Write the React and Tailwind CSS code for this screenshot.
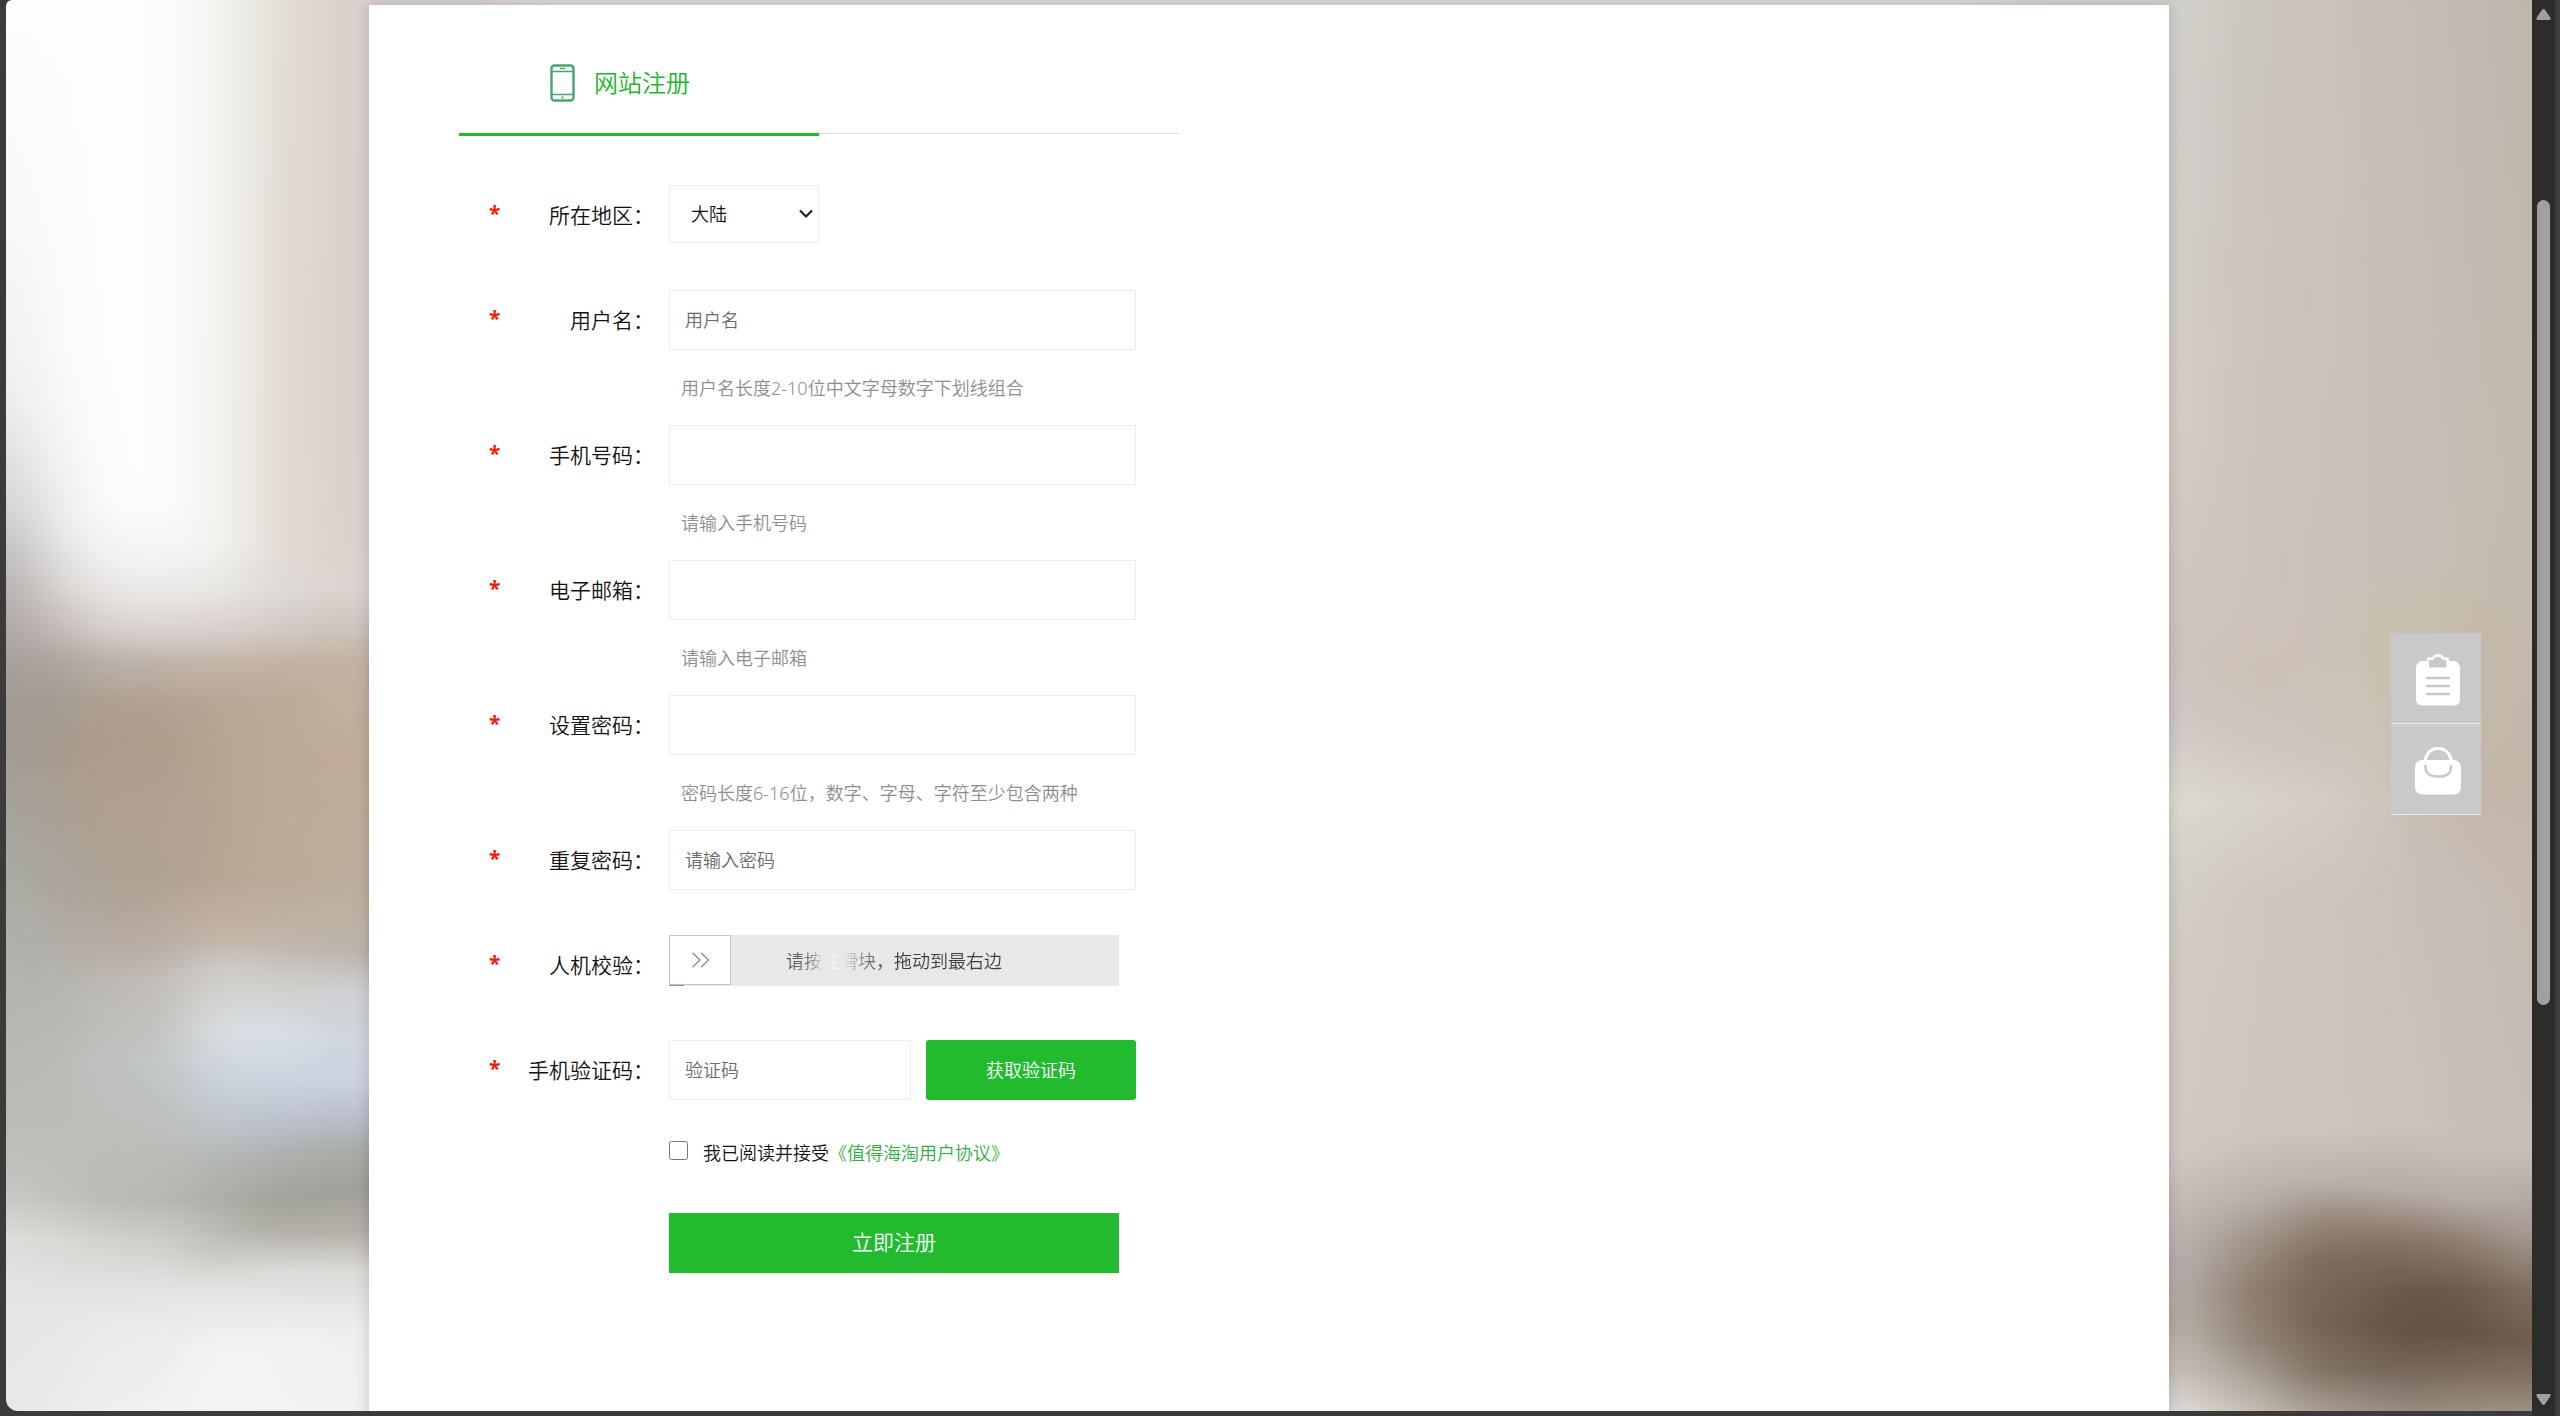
import { useId } from "react";

// Vertical colour runs of the blurred room photo behind the page: [x, width, [[y, colour], ...]]
const PHOTO_COLUMNS = [
  [-120, 150, [[0, "#fdfdfd"], [220, "#f8f8f8"], [400, "#ececec"], [500, "#d5d3d3"], [560, "#bdbab9"], [620, "#b0a8a5"], [680, "#a49c97"], [740, "#a29b93"], [800, "#a4a29b"], [870, "#aaaba4"], [1000, "#b3b6af"], [1150, "#bdc0b9"], [1200, "#c8cac5"], [1240, "#dcdeda"], [1290, "#e4e4e3"], [1410, "#e8e8e8"]]],
  [30, 50, [[0, "#fdfdfd"], [350, "#fbfbfb"], [450, "#f6f6f6"], [530, "#ececeb"], [580, "#dcd9d7"], [630, "#c4bbb7"], [660, "#aea59f"], [700, "#a39b92"], [760, "#a79a8d"], [820, "#aa9f94"], [880, "#a9a49c"], [940, "#b0aca6"], [1000, "#b6b6b0"], [1100, "#babcb6"], [1190, "#bec0ba"], [1240, "#d7d9d5"], [1290, "#e4e5e3"], [1410, "#eaeaea"]]],
  [80, 100, [[0, "#fdfdfd"], [500, "#fdfdfd"], [560, "#f4f3f2"], [600, "#e6e3e1"], [630, "#d9d1ce"], [660, "#bfb4ab"], [700, "#b0a193"], [740, "#ae9b8a"], [800, "#b0a090"], [880, "#aea294"], [940, "#b7aaa1"], [980, "#bfbab4"], [1060, "#c0c4c2"], [1150, "#bbbdb8"], [1200, "#b8bbb5"], [1240, "#ced1cb"], [1280, "#e0e1df"], [1330, "#ebebeb"], [1410, "#f0f0f0"]]],
  [180, 60, [[0, "#f5f6f2"], [540, "#f4f5f2"], [590, "#e9e7e4"], [630, "#d9d0cc"], [660, "#c4b7ab"], [700, "#b9a795"], [780, "#b6a592"], [880, "#b8a593"], [940, "#c5b7ab"], [970, "#d0cdc9"], [1030, "#dbdfe0"], [1080, "#cad3dc"], [1130, "#bdc3c6"], [1160, "#b3b7b3"], [1200, "#adafa8"], [1250, "#c5c5be"], [1290, "#e4e4e3"], [1350, "#f3f3f3"], [1410, "#f4f5f6"]]],
  [240, 60, [[0, "#e3ded7"], [540, "#e4dcd5"], [590, "#dedbd7"], [630, "#d4c9c4"], [660, "#c3b4a6"], [700, "#bba896"], [880, "#baab97"], [940, "#c2b5aa"], [980, "#cfccc8"], [1030, "#d9e0e9"], [1080, "#ccd5df"], [1120, "#bcc2ce"], [1160, "#adafab"], [1200, "#a2a299"], [1230, "#b0aea6"], [1270, "#dddcda"], [1340, "#f2f2f4"], [1410, "#f3f3f5"]]],
  [300, 200, [[0, "#dad1cc"], [450, "#d9d1cc"], [590, "#dbd3ce"], [630, "#cbc3bd"], [660, "#c4b3a3"], [760, "#c0ab98"], [880, "#bcae9c"], [950, "#bdb4ac"], [990, "#cfcfd0"], [1040, "#ced6df"], [1080, "#ccd2df"], [1120, "#b7bcc8"], [1150, "#a9aca9"], [1190, "#a1a199"], [1230, "#b4b0a8"], [1270, "#dcdad7"], [1330, "#efeff0"], [1410, "#f1f1f3"]]],
  [500, 1500, [[0, "#dcdad8"], [1410, "#d6d2cf"]]],
  [2000, 210, [[0, "#d3d1cb"], [180, "#d2cfc9"], [420, "#d6cdc7"], [650, "#cec4bf"], [720, "#cfc8c4"], [800, "#ded8d1"], [870, "#d5d0c9"], [1000, "#d2cac4"], [1150, "#d1c9c4"], [1200, "#c4bbb6"], [1270, "#b5aeaa"], [1320, "#b5ada4"], [1370, "#c6c0b9"], [1410, "#dedad5"]]],
  [2210, 70, [[0, "#cbc5bf"], [600, "#cdc2bd"], [670, "#ccc0b4"], [740, "#cfc6c0"], [800, "#d8d2cc"], [900, "#cfc7c1"], [1130, "#cfc6c0"], [1200, "#b9b0ab"], [1240, "#a19489"], [1290, "#8e7d6f"], [1340, "#93867a"], [1410, "#c5bdb4"]]],
  [2280, 80, [[0, "#c9c2bc"], [640, "#cbc0b7"], [740, "#cdc3ba"], [800, "#d4ccc7"], [900, "#cdc4be"], [1130, "#ccc4be"], [1180, "#bbb1ac"], [1220, "#958679"], [1260, "#7c6a5b"], [1320, "#736253"], [1370, "#7f7265"], [1410, "#a79b8f"]]],
  [2360, 70, [[0, "#c5bdb8"], [560, "#c8bfb9"], [640, "#c9c0ad"], [800, "#cbc1b6"], [900, "#cac0bb"], [1130, "#cbc2bc"], [1190, "#b6aba5"], [1240, "#867466"], [1290, "#6b5849"], [1330, "#655243"], [1370, "#74665a"], [1410, "#968a7e"]]],
  [2430, 60, [[0, "#c2b9b4"], [560, "#c5bcb1"], [640, "#c6bba8"], [800, "#c4b7aa"], [900, "#c8beb8"], [1150, "#c8bfb9"], [1200, "#b6aca8"], [1240, "#8f7f72"], [1290, "#6b5949"], [1330, "#655242"], [1370, "#7b6b5e"], [1410, "#9b8e80"]]],
  [2490, 160, [[0, "#beb6aa"], [500, "#c3bab0"], [800, "#c3b6aa"], [900, "#c5b9ae"], [1150, "#c5bdb7"], [1230, "#a89d96"], [1290, "#806f61"], [1340, "#715c4c"], [1370, "#7e6c5f"], [1410, "#9b9084"]]],
];

function PhotoBackdrop() {
  return (
    <svg className="absolute inset-0 size-full" viewBox="0 0 2526 1410" preserveAspectRatio="none" aria-hidden="true">
      <defs>
        <filter id="soft" filterUnits="userSpaceOnUse" x="-120" y="0" width="2780" height="1410" colorInterpolationFilters="sRGB">
          <feGaussianBlur stdDeviation="28 0" />
        </filter>
        {PHOTO_COLUMNS.map(([x, , stops]) => (
          <linearGradient key={x} id={`col${x}`} x1="0" y1="0" x2="0" y2="1410" gradientUnits="userSpaceOnUse">
            {stops.map(([y, c]) => (
              <stop key={y} offset={y / 1410} stopColor={c} />
            ))}
          </linearGradient>
        ))}
      </defs>
      <g filter="url(#soft)">
        {PHOTO_COLUMNS.map(([x, w]) => (
          <rect key={x} x={x} y="0" width={w + 1} height="1410" fill={`url(#col${x})`} />
        ))}
      </g>
    </svg>
  );
}

const inputClass =
  "h-[60px] border border-[#ececec] bg-white px-[15px] text-lg text-[#111] outline-none placeholder:text-[#6a6a6a]";

function Row({ label, id, children }) {
  return (
    <div className="flex items-center gap-[15px]">
      <div className="flex w-[195px] items-center justify-between pl-[30px]">
        <span className="pb-1 text-[21px] font-bold leading-8 text-[#f51c05]">*</span>
        <label htmlFor={id} className="text-[21px] leading-8 text-[#111]">
          {label}：
        </label>
      </div>
      {children}
    </div>
  );
}

function TextField({ label, hint, placeholder, type = "text" }) {
  const id = useId();
  return (
    <div className={hint ? "mb-[22px]" : "mb-[45px]"}>
      <Row label={label} id={id}>
        <input
          id={id}
          type={type}
          placeholder={placeholder}
          aria-describedby={hint ? `${id}-hint` : undefined}
          className={`${inputClass} w-[467px]`}
        />
      </Row>
      {hint && (
        <p id={`${id}-hint`} className="mt-[23px] ml-[222px] text-lg leading-[30px] text-[#8e8e8e]">
          {hint}
        </p>
      )}
    </div>
  );
}

function Shortcut({ name, children }) {
  return (
    <a href="#" aria-label={name} className="flex h-[91px] w-[90px] items-center justify-center border-b border-[#e6e6e6] bg-[#cac9c9] pt-1 pl-1">
      {children}
    </a>
  );
}

function ScrollBar() {
  return (
    <div className="flex w-7 shrink-0 flex-col items-center justify-between bg-linear-to-r from-[#2c2c2b] from-80% to-[#3e3e3e] to-90% pt-[9px] pr-[5px] pb-[11px]">
      <svg className="h-[11px] w-[15px]" viewBox="0 0 15 11" fill="#a0a0a0" aria-hidden="true">
        <path d="M6 .8Q7.500-.6 9 .8L14.500 9Q15 10.800 13.500 11H1.500Q0 10.800.5 9Z" />
      </svg>
      <div className="flex w-full grow flex-col items-center">
        <div className="basis-[13.1%]" />
        <div className="w-[13px] basis-[58.600%] rounded-full bg-[#a0a0a0]" />
      </div>
      <svg className="h-[11px] w-[15px]" viewBox="0 0 15 11" fill="#a0a0a0" aria-hidden="true">
        <path d="M6 10.200Q7.500 11.600 9 10.200L14.500 2Q15 .2 13.500 0H1.500Q0 .2.5 2Z" />
      </svg>
    </div>
  );
}

export default function App() {
  return (
    <div
      className="flex h-screen overflow-hidden bg-[#3b3b3b] pl-1.5 font-[350]"
      style={{ fontFamily: '"Noto Sans", "Noto Sans CJK SC", sans-serif' }}
    >
      <div className="relative mb-[5px] grow overflow-hidden rounded-tl-md rounded-bl-xl">
        <PhotoBackdrop />
        <main className="relative mx-auto mt-[5px] h-full max-w-[1800px] bg-white pl-[90px] shadow-[0_0_14px_rgba(0,0,0,0.18)]">
          <div className="flex h-[129px] max-w-[720px] border-b border-[#ddd]">
            <h1 className="-mb-[3px] flex w-[360px] items-center gap-[19px] border-b-3 border-[#22bb30] pt-7 pl-[91px] text-2xl leading-9 text-[#1fb52d]">
              <svg className="h-[38px] w-[25px]" viewBox="0 0 25 38" fill="none" stroke="#47a56d" strokeWidth="2.400" aria-hidden="true">
                <rect x="1.500" y="1.500" width="22" height="35" rx="3" />
                <path d="M2 7.500h21M2 30.500h21" strokeWidth="1.500" />
                <path d="M10 4.500h5" strokeWidth="1.500" />
                <circle cx="12.500" cy="33.500" r="1" strokeWidth="1" />
              </svg>
              <span>网站注册</span>
            </h1>
          </div>

          <form className="pt-[51px]" onSubmit={(e) => e.preventDefault()}>
            <div className="mb-[45px]">
              <Row label="所在地区" id="region">
                <div className="relative flex h-[60px] w-[150px] items-start">
                  <select
                    id="region"
                    className="h-[58px] w-full appearance-none border border-[#ececec] bg-white pl-[21px] text-lg text-[#111] outline-none"
                  >
                    <option>大陆</option>
                  </select>
                  <svg
                    className="pointer-events-none absolute top-6 right-[6px] h-[10px] w-[14px]"
                    viewBox="0 0 14 10"
                    fill="none"
                    stroke="#222"
                    strokeWidth="2.200"
                    aria-hidden="true"
                  >
                    <path d="M1 1.500l6 6 6-6" />
                  </svg>
                </div>
              </Row>
            </div>

            <TextField label="用户名" placeholder="用户名" hint="用户名长度2-10位中文字母数字下划线组合" />
            <TextField label="手机号码" type="tel" hint="请输入手机号码" />
            <TextField label="电子邮箱" type="email" hint="请输入电子邮箱" />
            <TextField label="设置密码" type="password" hint="密码长度6-16位，数字、字母、字符至少包含两种" />
            <TextField label="重复密码" type="password" placeholder="请输入密码" />

            <div className="mb-[45px]">
              <Row label="人机校验" id="verify">
                <div className="flex h-[60px] items-start">
                  <div className="relative flex h-[51px] w-[450px] items-center justify-center bg-[#e8e8e8]">
                    <input
                      id="verify"
                      type="range"
                      min="0"
                      max="100"
                      defaultValue="0"
                      className="absolute inset-0 h-[51px] w-full appearance-none bg-transparent [&::-webkit-slider-thumb]:mb-[1px] [&::-webkit-slider-thumb]:h-[50px] [&::-webkit-slider-thumb]:w-[62px] [&::-webkit-slider-thumb]:appearance-none [&::-webkit-slider-thumb]:border [&::-webkit-slider-thumb]:border-[#c4c4c4] [&::-webkit-slider-thumb]:bg-white"
                    />
                    <span className="pointer-events-none absolute bottom-0 left-0 h-px w-[15px] bg-[#7f9c78]" />
                    <svg
                      className="pointer-events-none absolute top-[17px] left-[22px] h-4 w-[19px]"
                      viewBox="0 0 19 16"
                      fill="none"
                      stroke="#8a8a8a"
                      strokeWidth="1.300"
                      aria-hidden="true"
                    >
                      <path d="M1.500.8L9 8l-7.500 7.200M10 .8L17.500 8 10 15.200" />
                    </svg>
                    <span className="pointer-events-none relative bg-[linear-gradient(90deg,#4c4c4c_0%,#7a7a7a_11%,#cfcfcf_16%,#e8e8e8_18%,#e8e8e8_21%,#ffffff_23%,#e8e8e8_25%,#e0e0e0_28%,#a0a0a0_33%,#3d3d3d_46%)] bg-clip-text text-lg leading-[30px] text-transparent">
                      请按住滑块，拖动到最右边
                    </span>
                  </div>
                </div>
              </Row>
            </div>

            <Row label="手机验证码" id="sms">
              <div className="flex w-[467px] gap-[15px]">
                <input id="sms" type="text" placeholder="验证码" className={`${inputClass} w-[242px]`} />
                <button type="button" className="h-[60px] grow rounded-[3px] bg-[#22bb30] text-lg text-white">
                  获取验证码
                </button>
              </div>
            </Row>

            <div className="mt-[38px] ml-[210px] flex items-start gap-[15px]">
              <input id="agree" type="checkbox" className="mt-[3px] size-[19px]" />
              <label htmlFor="agree" className="text-lg leading-[30px] text-[#111]">
                我已阅读并接受
                <a href="#" className="text-[#2fae3d]">
                  《值得海淘用户协议》
                </a>
              </label>
            </div>

            <button type="submit" className="mt-[45px] ml-[210px] h-[60px] w-[450px] bg-[#22bb30] text-[21px] text-white">
              立即注册
            </button>
          </form>
        </main>

        <nav className="absolute top-[633px] right-[51px]">
          <Shortcut name="订单">
            <svg className="h-[52px] w-[46px]" viewBox="0 0 46 52" aria-hidden="true">
              <path
                fill="#fff"
                fillRule="evenodd"
                d="M7 7h5V4.500q0-1 1.500-1h3.500C18.500.8 21 0 23 0s4.500.8 6 3.500h3.500q1.500 0 1.500 1V7h5q6 1 6 7v31q0 6-6 6.500H7Q1 51 1 45V14q0-6 6-7ZM14 13.500h17.500V6h-3.500C26.500 3.800 25 2.800 23 2.800S19.500 3.800 18 6h-4Z"
              />
              <path stroke="#cac9c9" strokeWidth="2.500" strokeLinecap="round" d="M12 24h22M12 32h22M12 40h22" />
            </svg>
          </Shortcut>
          <Shortcut name="购物袋">
            <svg className="h-[48px] w-[46px]" viewBox="0 0 46 48" fill="none" aria-hidden="true">
              <path d="M9.500 16C11 7 15.500 1.500 23 1.500S35.500 7 37 16" stroke="#fff" strokeWidth="3" />
              <rect x="0" y="13" width="46" height="34.500" rx="7" fill="#fff" />
              <path d="M10.500 18v2c0 6 4.500 9.500 11.500 9.500h3c7 0 11-3.500 11-9.500v-2" stroke="#cac9c9" strokeWidth="2.500" />
            </svg>
          </Shortcut>
        </nav>
      </div>
      <ScrollBar />
    </div>
  );
}
